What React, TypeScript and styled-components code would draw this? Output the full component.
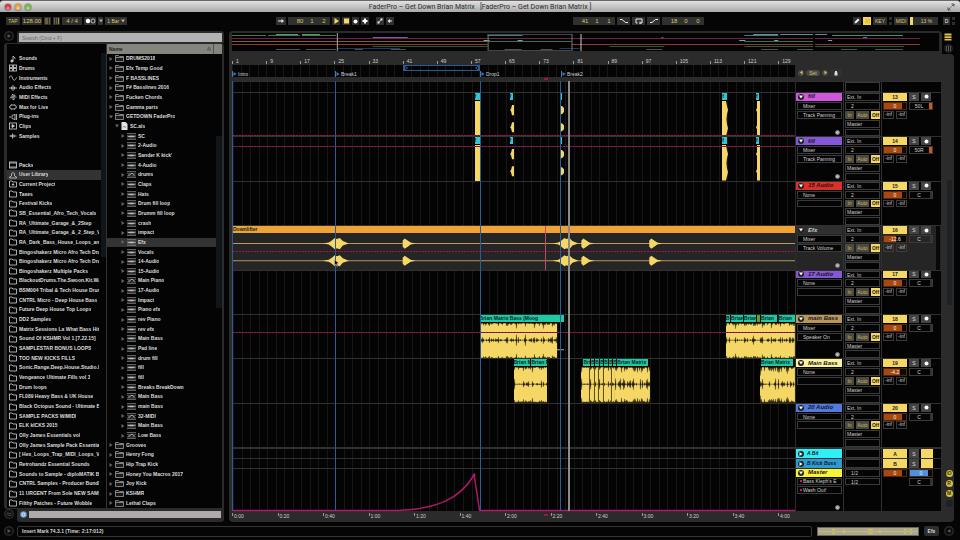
import React from "react";
import styled, { createGlobalStyle, css } from "styled-components";

const SANS = '"Liberation Sans", Arial, sans-serif';
const YELLOW = "#f5d766";
const SPAN = 563;

const Global = createGlobalStyle`
  * { box-sizing: border-box; }
  html, body, #root { margin: 0; height: 100%; }
  body { background: #050505; overflow: hidden; color: #d0d0d0; font: 5px/7px ${SANS}; }
  button, input, select { font: inherit; color: inherit; margin: 0; padding: 0; border: 0; border-radius: 0; background: none; appearance: none; min-width: 0; }
  ul { list-style: none; margin: 0; padding: 0; }
  svg { display: block; flex: none; }
`;

const Page = styled.div`
  height: 100vh;
  display: grid;
  grid-template-rows: 12px 19px minmax(0, 1fr) 17px;
`;

/* ---------- title bar ---------- */

const TitleBar = styled.header`
  display: flex;
  align-items: center;
  padding: 0 5px;
  border-top: 1px solid #6d646c;
  background: linear-gradient(#e2e2e2, #a9a9a9);
  border-radius: 3px 3px 0 0;
`;
const Lights = styled.div`
  flex: 1 0 0;
  display: flex;
  gap: 4px;
`;
const Light = styled.button<{ $c: string }>`
  width: 6px;
  height: 6px;
  border-radius: 50%;
  background: radial-gradient(circle at 50% 70%, #fff9, transparent 45%), ${(p) => p.$c};
  box-shadow: 0 0 0 1px #0003;
`;
const Title = styled.h1`
  margin: 0;
  color: #2c2c2c;
  font: 400 7px/10px Roboto, "Noto Sans", sans-serif;
  white-space: pre;
`;
const TitleEnd = styled.div`
  flex: 1 0 0;
  display: flex;
  justify-content: flex-end;
`;

/* ---------- transport ---------- */

const Transport = styled.div`
  display: grid;
  grid-template-columns: 270fr 297fr 280fr 107fr;
  align-items: center;
  padding: 0 0 1px 6px;
`;
const Group = styled.div`
  display: flex;
  align-items: center;
  gap: 2px;
`;
const Btn = styled.button<{ $w: number; $on?: boolean; $white?: boolean }>`
  display: flex;
  flex: none;
  align-items: center;
  justify-content: center;
  width: ${(p) => p.$w}px;
  height: 8px;
  background: ${(p) => (p.$on ? YELLOW : "#303030")};
  color: ${(p) => (p.$on ? "#222" : p.$white ? "#eee" : "#dcc765")};
`;
const NumBox = styled.input<{ $w: number }>`
  width: ${(p) => p.$w}px;
  height: 8px;
  background: #303030;
  color: #dcc765;
  font-size: 6px;
  text-align: center;
`;
const Fields = styled.div`
  display: flex;
  width: 42px;
  padding-left: 6px;
  background: #303030;
`;
const Space = styled.span<{ $w: number }>`
  width: ${(p) => p.$w}px;
`;
const Cpu = styled.div`
  width: 28px;
  height: 8px;
  padding-left: 2px;
  line-height: 8px;
  text-align: center;
  color: #dcc765;
  background: #303030;
  border-left: 3px solid ${YELLOW};
`;
const Dots = styled.div`
  display: grid;
  gap: 2px;
  width: 3px;
  &::before, &::after { content: ""; height: 3px; background: #2e2e2d; }
`;

/* ---------- frame ---------- */

const Main = styled.main`
  display: grid;
  grid-template-columns: 220px minmax(0, 1fr);
  column-gap: 5px;
  padding: 0 6px 0 4px;
  min-height: 0;
`;
const Browser = styled.section`
  display: grid;
  grid-template-rows: 12px minmax(0, 1fr) 13px;
  padding-bottom: 1px;
  min-height: 0;
`;
const BrowserRow = styled.div`
  display: grid;
  grid-template-columns: 13px minmax(0, 1fr);
`;
const RoundBtn = styled.button`
  width: 10px;
  height: 10px;
  border-radius: 50%;
  background: #2a2a2a;
  display: flex;
  align-items: center;
  justify-content: center;
`;
const SearchFrame = styled.div`
  background: #2b2b2b;
  border-radius: 3px 3px 0 0;
  padding: 2px 2px 1px;
`;
const Search = styled.input`
  display: block;
  width: 100%;
  height: 9px;
  padding-left: 3px;
  background: #b3b3b3;
  color: #333;
  &::placeholder { color: #6b6b6b; opacity: 1; }
`;
const BrowserPanel = styled.div`
  display: grid;
  grid-template-columns: 94px 5px 1px minmax(0, 1fr);
  background: #040404;
  border: solid #2b2b2b;
  border-width: 1px 2px 1px 3px;
  border-radius: 3px 3px 0 3px;
  min-height: 0;
`;
const List = styled.ul<{ $padTop?: boolean }>`
  display: grid;
  grid-template-rows: repeat(47, minmax(0, 1fr));
  margin-top: ${(p) => (p.$padTop ? 10 : 0)}px;
  min-height: 0;
`;
const ListItem = styled.li`
  display: grid;
  min-height: 0;
`;
const Entry = styled.button<{ $sel?: boolean; $level?: number }>`
  display: flex;
  align-items: center;
  gap: 2px;
  width: 100%;
  padding: 0 2px;
  padding-left: ${(p) => 2 + (p.$level ?? 0) * 6}px;
  overflow: hidden;
  background: ${(p) => (p.$sel ? "#333" : "transparent")};
  color: #dcdcdc;
  font-weight: 700;
  text-align: left;
  white-space: nowrap;
  line-height: 7px;
`;
const Label = styled.span`
  overflow: hidden;
`;
const ScrollTrack = styled.div<{ $from: number; $to: number }>`
  background: linear-gradient(transparent ${(p) => p.$from}%, #10151a ${(p) => p.$from}% ${(p) => p.$to}%, transparent ${(p) => p.$to}%);
`;
const Divider = styled.div`
  background: #333;
`;
const Files = styled.div`
  display: grid;
  grid-template-columns: minmax(0, 1fr) 6px;
  grid-template-rows: 10px minmax(0, 1fr);
  min-height: 0;
`;
const FilesHead = styled.div`
  grid-column: 1 / -1;
  display: flex;
  justify-content: space-between;
  padding: 0 11px 0 2px;
  line-height: 10px;
  font-weight: 700;
  color: #222;
  background: linear-gradient(90deg, transparent 106px, #555 106px 107px, transparent 107px), #85857d;
`;
const InfoFrame = styled.div`
  display: grid;
  grid-template-columns: 8px minmax(0, 1fr);
  align-items: center;
  background: #2b2b2b;
  border-radius: 0 0 3px 3px;
  padding: 1px 3px 3px;
`;
const InfoBar = styled.div`
  height: 7px;
  margin-left: 1px;
  background: #aeaaaa;
`;

/* ---------- arrangement ---------- */

const Arrange = styled.section`
  display: grid;
  grid-template-rows: 23px minmax(0, 1fr);
  padding-bottom: 1px;
  min-height: 0;
`;
const OverviewRow = styled.div`
  display: grid;
  grid-template-columns: minmax(0, 1fr) 12px;
`;
const OverviewFrame = styled.div`
  background: #2b2b2b;
  border-radius: 4px 4px 0 0;
  padding: 2px 3px 3px;
`;
const OverviewSvg = styled.svg`
  width: 100%;
  height: 18px;
  background: #040404;
`;
const SideIcons = styled.div`
  display: grid;
  justify-items: center;
  align-content: space-around;
`;
const Body = styled.div`
  display: grid;
  grid-template-columns: minmax(0, 1fr) 146px 13px;
  grid-template-rows: 11px 12px 4px minmax(0, 1fr) 11px;
  padding-left: 3px;
  background: #2b2b2b;
  border-radius: 0 4px 4px 4px;
  min-height: 0;
`;
const grid = css`
  background-color: #040404;
  background-image: repeating-linear-gradient(90deg, #171717 0, #171717 1px, transparent 1px, transparent 1.5158%);
`;
const Ruler = styled.div<{ $row: number }>`
  grid-column: 1;
  grid-row: ${(p) => p.$row};
  position: relative;
  overflow: hidden;
`;
const Mark = styled.span<{ $x: number }>`
  position: absolute;
  bottom: 1px;
  left: ${(p) => (p.$x / SPAN) * 100}%;
  padding-left: 4px;
  line-height: 6px;
  color: #cfcfcf;
  background: linear-gradient(#999, #999) 0 100% / 1px 3px no-repeat;
  white-space: nowrap;
`;
const TimeMark = styled(Mark)`
  bottom: 3px;
  padding-left: 2px;
  background-position: 0 0;
`;
const InsertMark = styled.i<{ $top: number }>`
  position: absolute;
  top: ${(p) => p.$top}px;
  left: ${(312 / SPAN) * 100}%;
  width: 4px;
  height: 2px;
  background: #a01838;
`;
const Locators = styled.div`
  ${grid}
  grid-column: 1;
  grid-row: 2;
  position: relative;
`;
const Loop = styled.div`
  position: absolute;
  top: 0;
  left: ${(170.5 / SPAN) * 100}%;
  width: ${(77 / SPAN) * 100}%;
  height: 6px;
  display: flex;
  align-items: center;
  justify-content: space-between;
  border: 1px solid #2c5c98;
`;
const Locator = styled.button<{ $x: number }>`
  position: absolute;
  top: 6px;
  left: ${(p) => (p.$x / SPAN) * 100}%;
  display: flex;
  align-items: center;
  gap: 1px;
  height: 6px;
  border-left: 1px solid #3b7cc4;
  line-height: 6px;
`;
const SetRow = styled.div`
  grid-column: 2;
  grid-row: 1 / 3;
  align-self: end;
  display: flex;
  align-items: center;
  gap: 2px;
  height: 9px;
  margin-left: 3px;
`;
const Pill = styled.button<{ $w: number }>`
  width: ${(p) => p.$w}px;
  height: 6px;
  line-height: 6px;
  border-radius: 3px;
  display: flex;
  align-items: center;
  justify-content: center;
  background: #4a4a42;
  color: #d0c070;
`;
const trackRows = css`
  grid-row: 4;
  display: grid;
  grid-template-rows: 11px repeat(8, minmax(0, 1fr)) 11px 10px 43px;
  min-height: 0;
`;
const Lanes = styled.div`
  ${trackRows}
  ${grid}
  grid-column: 1;
  position: relative;
  border-left: 1px solid #2c5c98;
`;
const Lane = styled.div<{ $sel?: boolean; $thick?: boolean }>`
  position: relative;
  min-height: 0;
  border-top: ${(p) => (p.$thick ? 2 : 1)}px solid #303030;
  background: ${(p) => (p.$sel ? "#252525" : "transparent")};
`;
const VLine = styled.i<{ $x: number; $c: string; $w?: number }>`
  position: absolute;
  z-index: 2;
  top: 0;
  bottom: 0;
  left: ${(p) => (p.$x / SPAN) * 100}%;
  width: ${(p) => p.$w ?? 1}px;
  background: ${(p) => p.$c};
`;
const Pointer = styled.svg`
  position: absolute;
  z-index: 3;
  top: 64%;
  left: 40%;
`;
const PointerSpot = styled.div<{ $x: number }>`
  position: absolute;
  z-index: 3;
  top: 75%;
  left: ${(p) => (p.$x / SPAN) * 100}%;
`;
const Automation = styled.i<{ $y: number }>`
  position: absolute;
  z-index: 1;
  left: 0;
  right: 0;
  top: ${(p) => p.$y}%;
  height: 1px;
  background: repeating-linear-gradient(90deg, #8e1c50 0 2px, #4c1230 2px 3px);
`;
const ClipName = styled.button<{ $x: number; $w: number; $c?: string }>`
  position: absolute;
  top: 0;
  left: ${(p) => (p.$x / SPAN) * 100}%;
  width: ${(p) => (p.$w / SPAN) * 100}%;
  height: 7px;
  overflow: hidden;
  white-space: nowrap;
  text-align: left;
  font-weight: 700;
  color: #0b2620;
  line-height: 7px;
  background: ${(p) => p.$c ?? "#1fc9a4"};
`;
const WaveBox = styled.svg<{ $x: number; $w: number }>`
  position: absolute;
  top: 8px;
  left: ${(p) => (p.$x / SPAN) * 100}%;
  width: ${(p) => (p.$w / SPAN) * 100}%;
  height: calc(100% - 8px);
`;
const Heads = styled.div`
  ${trackRows}
  grid-column: 2;
  margin-left: 1px;
  background: #040404;
`;
const Head = styled.div<{ $sel?: boolean; $thick?: boolean }>`
  display: grid;
  grid-template-columns: 48px 38px minmax(0, 1fr);
  min-height: 0;
  border-top: ${(p) => (p.$thick ? 2 : 1)}px solid #303030;
  background: ${(p) => (p.$sel ? "linear-gradient(90deg, transparent 140px, #080808 140px 144px, transparent 144px), #252525" : "transparent")};
  overflow: hidden;
`;
const Cell = styled.div<{ $rows?: number }>`
  display: grid;
  grid-template-rows: repeat(${(p) => p.$rows ?? 5}, minmax(0, 1fr));
  row-gap: 1px;
  align-content: start;
  min-height: 0;
  padding: 0 1px;
  border-right: 1px solid #303030;
  &:last-child { border-right: 0; padding: 0 1px; }
`;
const NameBar = styled.div<{ $c: string; $light?: boolean }>`
  display: flex;
  align-items: center;
  gap: 4px;
  margin-left: -1px;
  padding-left: 2px;
  background: ${(p) => p.$c};
  color: ${(p) => (p.$light ? "#ccc" : "#1a1424")};
  font: italic 700 6px/7px ${SANS};
  white-space: nowrap;
  min-height: 0;
`;
const ReturnName = styled(NameBar)`
  gap: 3px;
  font-size: 5px;
`;
const Fold = styled.button`
  width: 6px;
  height: 6px;
  border-radius: 50%;
  background: #222;
  display: flex;
  align-items: center;
  justify-content: center;
`;
const Choice = styled.select<{ $indent?: number }>`
  width: 100%;
  height: 100%;
  min-height: 0;
  padding-left: ${(p) => p.$indent ?? 1}px;
  border: 1px solid #3a3a3a;
  background: #040404;
  color: #cfcfcf;
  line-height: 6px;
`;
const Line = styled.div<{ $cols: string }>`
  display: grid;
  grid-template-columns: ${(p) => p.$cols};
  column-gap: 2px;
  min-height: 0;
`;
const Mini = styled.button<{ $tone: "on" | "dim" | "grey" | "blank" }>`
  display: flex;
  align-items: center;
  justify-content: center;
  min-height: 0;
  overflow: hidden;
  line-height: 6px;
  background: ${(p) => ({ on: YELLOW, dim: "#4b4a3f", grey: "#444", blank: "transparent" })[p.$tone]};
  color: ${(p) => ({ on: "#222", dim: "#c9b75f", grey: "#ddd", blank: "#ddd" })[p.$tone]};
  font-weight: ${(p) => (p.$tone === "on" ? 700 : 400)};
`;
const Vol = styled.input<{ $fill: number; $c?: string }>`
  width: 100%;
  height: 100%;
  text-align: center;
  color: #eee;
  border: 1px solid #4a2a16;
  background: linear-gradient(90deg, ${(p) => p.$c ?? "#a8480f"} ${(p) => p.$fill}%, #0a0a0a ${(p) => p.$fill}%);
`;
const Pan = styled.input<{ $hot?: boolean }>`
  width: 100%;
  height: 100%;
  padding-right: 4px;
  text-align: center;
  border: 1px solid #3a3a3a;
  background: ${(p) => (p.$hot ? "linear-gradient(90deg, transparent 86%, #c85a1e 86%)" : "linear-gradient(90deg, transparent 90%, #333 90%)")};
`;
const Level = styled.output`
  border: 1px solid #3a3a3a;
  text-align: center;
  line-height: 5px;
  overflow: hidden;
`;
const AddRow = styled.div`
  display: flex;
  justify-content: flex-end;
  align-items: center;
  padding-right: 2px;
`;
const AddBtn = styled.button`
  width: 5px;
  height: 5px;
  border-radius: 50%;
  border: 1px solid #777;
  background: #bbb;
`;
const Device = styled.div`
  display: flex;
  align-items: center;
  gap: 1px;
  padding-left: 2px;
  border: 1px solid #3a3a3a;
  overflow: hidden;
  white-space: nowrap;
  line-height: 6px;
  &::before { content: ""; flex: none; width: 2px; height: 2px; background: #d01860; }
`;
const Side = styled.div`
  grid-column: 3;
  grid-row: 4;
  display: flex;
  flex-direction: column;
  justify-content: flex-end;
  align-items: center;
  gap: 3px;
  padding: 0 0 4px 3px;
  background: linear-gradient(transparent 23%, #1e2225 23% 52%, transparent 52%) 75% 0 / 5px 100% no-repeat;
`;
const SideBtn = styled.button<{ $off?: boolean }>`
  width: 7px;
  height: 7px;
  border-radius: 50%;
  line-height: 7px;
  font-weight: 700;
  text-align: center;
  color: #3a3210;
  background: ${(p) => (p.$off ? "#1b2229" : "#d8c242")};
`;

/* ---------- status ---------- */

const Status = styled.footer`
  display: grid;
  grid-template-columns: 8px minmax(0, 1fr) 102px 15px 10px;
  column-gap: 5px;
  align-items: center;
  padding: 0 6px 1px 4px;
`;
const StatusText = styled.div`
  height: 11px;
  padding-left: 4px;
  border: 1px solid #333;
  border-radius: 2px;
  font-weight: 700;
  line-height: 9px;
  color: #d5d5d5;
`;
const DeviceStrip = styled.svg`
  width: 100%;
  height: 9px;
  background: #aaa890;
  border: 1px solid #666;
`;
const EfxTab = styled.button`
  height: 10px;
  border-radius: 2px;
  background: #2e2e2e;
  color: #ddd;
  font-weight: 700;
`;

/* ---------- icons ---------- */

type IconName = "note" | "drums" | "sine" | "fx" | "midifx" | "max" | "plug" | "clip" | "sample" | "packs" | "user" | "project" | "folder";
const shapes: Record<IconName, React.ReactNode> = {
  note: <><path d="M8 2v9M8 2l4 4v2" /><ellipse cx="6" cy="12" rx="2.5" ry="2" fill="#ddd" /></>,
  drums: <><rect x="1" y="2" width="6" height="5" /><rect x="9" y="2" width="6" height="5" /><rect x="1" y="9" width="6" height="5" /><rect x="9" y="9" width="6" height="5" /></>,
  sine: <path d="M0 9c2-7 5-7 7-1s5 6 8-1" />,
  fx: <path d="M0 8h16M5 5v6M8 2v12M11 5v6" />,
  midifx: <><path d="M3 8h12M8 2v12M5 5l3-3M8 14l4-3M4 11v-3" /><circle cx="11" cy="5" r="1" /></>,
  max: <><rect x="2" y="4" width="12" height="8" rx="3" /><path d="M0 8h2M14 8h2M5 3v2M11 3v2M5 11v2M11 11v2" /></>,
  plug: <path d="M0 8h4M12 2v12M12 3L6 5v6l6 2M15 2v12" />,
  clip: <><rect x="1" y="2" width="14" height="12" /><path d="M6 5l5 3-5 3z" fill="#ddd" /></>,
  sample: <path d="M1 8h14M4 6v4M7 3v10M10 5v6" />,
  packs: <><rect x="1" y="2" width="14" height="12" /><path d="M1 4h14M1 12h14" /></>,
  user: <path d="M1 14h14v-2l-4-2V8c2-6-8-6-6 0v2l-4 2z" />,
  project: <><path d="M1 2h5l2 2h7v10H1z" /><circle cx="8" cy="9" r="1.5" fill="#ddd" /></>,
  folder: <path d="M1 2h5l2 2h7v10H1z" />,
};
const Icon = ({ n, s = 8 }: { n: IconName; s?: number }) => (
  <svg width={s} height={s} viewBox="0 0 16 16" fill="none" stroke="#c8c8c8" strokeWidth="1.7">{shapes[n]}</svg>
);
const Tri = ({ open, c = "#666" }: { open?: boolean; c?: string }) => (
  <svg width="4" height="4" viewBox="0 0 8 8"><path d={open ? "M0 1h8L4 7z" : "M1 0v8l6-4z"} fill={c} /></svg>
);
const FileIcon = ({ kind }: { kind: string }) => {
  if (kind === "folder")
    return <svg width="9" height="7" viewBox="0 0 18 14" fill="#1b1b1b" stroke="#9a9a9a" strokeWidth="1.6"><path d="M1 1h6l2 2h8v10H1zM1 5h16" /></svg>;
  if (kind === "set")
    return <svg width="7" height="8" viewBox="0 0 14 16"><path d="M1 0h8l4 4v12H1z" fill="#e4e4e4" /><path d="M4 11l2-3 2 3 2-1" stroke="#444" fill="none" /></svg>;
  return (
    <svg width="9" height="7" viewBox="0 0 18 14" fill="none" stroke="#777" strokeWidth="1.6">
      <path d="M0 1h18M0 13h18M0 4.500h18M0 10h18" />
      {kind === "midi" ? <path d="M2 8h4l2-3h3l2 3h3" stroke="#ccc" /> : <path d="M1 7h16M5 6v2M8 5v4M11 5.500v3" stroke="#ccc" />}
    </svg>
  );
};
const PlayRing = ({ back }: { back?: boolean }) => (
  <RoundBtn aria-label={back ? "Hide device" : "Show"}>
    <svg width="8" height="8" viewBox="0 0 16 16"><circle cx="8" cy="8" r="7" fill="#0a0a0a" /><path d={back ? "M11 4v8L4 8z" : "M5 4v8l7-4z"} fill="#555" /></svg>
  </RoundBtn>
);
const G = ({ d, fill, w = 8 }: { d: string; fill?: string; w?: number }) => (
  <svg width={w} height="6" viewBox={`0 0 ${w * 2} 12`} fill={fill ?? "none"} stroke={fill ? "none" : "#eee"} strokeWidth="2"><path d={d} /></svg>
);

/* ---------- data ---------- */

const categories: [IconName, string][] = [
  ["note", "Sounds"], ["drums", "Drums"], ["sine", "Instruments"], ["fx", "Audio Effects"], ["midifx", "MIDI Effects"],
  ["max", "Max for Live"], ["plug", "Plug-ins"], ["clip", "Clips"], ["sample", "Samples"],
];
const places: [IconName, string][] = [
  ["packs", "Packs"], ["user", "User Library"], ["project", "Current Project"],
  ...[
    "Taxes", "Festival Kicks", "SB_Essential_Afro_Tech_Vocals", "RA_Ultimate_Garage_&_2Step", "RA_Ultimate_Garage_&_2_Step_V",
    "RA_Dark_Bass_House_Loops_an", "Bingoshakerz Micro Afro Tech Dru", "Bingoshakerz Micro Afro Tech Dru", "Bingoshakerz Multiple Packs",
    "BlackoutDrums.The.Swoon.Kit.WA", "BSM004 Tribal & Tech House Drun", "CNTRL Micro - Deep House Bass", "Future Deep House Top Loops",
    "DD2 Samples", "Matrix Sessions La What Bass Hit", "Sound Of KSHMR Vol 1 [7.22.15]", "SAMPLESTAR BONUS LOOPS", "TOO NEW KICKS FILLS",
    "Sonic.Range.Deep.House.Studio.K", "Vengeance Ultimate Fills vol 3", "Drum loops", "FL089 Heavy Bass & UK House", "Black Octopus Sound - Ultimate B",
    "SAMPLE PACKS W/MIDI", "ELK kICKS 2015", "Olly James Essentials vol", "Olly James Sample Pack Essentia", "[ Hex_Loops_Trap_MIDI_Loops_V",
    "Retrohandz Essential Sounds", "Sounds to Sample - diploMATIK B", "CNTRL Samples - Producer Bundl", "11 URGENT From Sole NEW SAMI", "Filthy Patches - Future Wobble",
  ].map((t): [IconName, string] => ["folder", t]),
];
const clipFiles = [
  "SC", "2-Audio", "Sander K kick'", "4-Audio", "~drums", "Claps", "Hats", "Drum fill loop", "Drumm fill loop", "crash", "impact", "Efx", "Vocals",
  "14-Audio", "15-Audio", "~Main Piano", "17-Audio", "Impact", "Piano efx", "rev Piano", "rev efx", "Main Bass", "Pad line", "drum fill", "fill", "fill",
  "Breaks BreakDown", "~Main Bass", "main Bass", "~32-MIDI", "Main Bass", "~Low Bass",
];
type FileRow = { level: number; kind: string; label: string; open?: boolean };
const files: FileRow[] = [
  ...["DRUMS2018", "Efx Temp Good", "F BASSLINES", "F# Basslines 2016", "Fucken Chords", "Gamma parts"].map((label) => ({ level: 0, kind: "folder", label })),
  { level: 0, kind: "folder", label: "GETDOWN FaderPro", open: true },
  { level: 1, kind: "set", label: "SC.als", open: true },
  ...clipFiles.map((c) => ({ level: 2, kind: c[0] === "~" ? "midi" : "audio", label: c.replace("~", "") })),
  ...["Grooves", "Henry Fong", "Hip Trap Kick", "Honey You Macros 2017", "Joy Kick", "KSHMR", "Lethal Claps"].map((label) => ({ level: 0, kind: "folder", label })),
];

type Track = { name: string; color: string; dev: string; param?: string; n: number; vol: string; fill: number; pan: string; sel?: boolean };
const tracks: Track[] = [
  { name: "fill", color: "#cf56dd", dev: "Mixer", param: "Track Panning", n: 13, vol: "0", fill: 84, pan: "50L" },
  { name: "fill", color: "#8458d6", dev: "Mixer", param: "Track Panning", n: 14, vol: "0", fill: 84, pan: "50R" },
  { name: "15 Audio", color: "#dc3226", dev: "None", n: 15, vol: "0", fill: 84, pan: "C" },
  { name: "Efx", color: "#303030", dev: "Mixer", param: "Track Volume", n: 16, vol: "-12.6", fill: 55, pan: "C", sel: true },
  { name: "17 Audio", color: "#8458d6", dev: "None", n: 17, vol: "0", fill: 84, pan: "C" },
  { name: "main Bass", color: "#b9975c", dev: "Mixer", param: "Speaker On", n: 18, vol: "0", fill: 84, pan: "C" },
  { name: "Main Bass", color: "#fbf49c", dev: "None", n: 19, vol: "-4.2", fill: 74, pan: "C" },
  { name: "20 Audio", color: "#5279dc", dev: "None", n: 20, vol: "0", fill: 84, pan: "C" },
];

/* ---------- waveforms ---------- */

const noise = (i: number, seed: number) => {
  const v = Math.sin(i * 12.9898 + seed * 78.233) * 43758.5453;
  return v - Math.floor(v);
};

const BassWave = ({ x, w, seed, rough = 1 }: { x: number; w: number; seed: number; rough?: number }) => {
  let d = "";
  for (let i = 0; i < w; i += 1) {
    const beat = i % 9 < 1 ? 3 : 0;
    const a = noise(i, seed) ** 2 * 3 * rough + beat;
    const m = noise(i, seed + 7) ** 3 * 3 * rough + beat;
    d += `M${i} 0h1l-.5 ${a.toFixed(1)}zM${i} 36h1l-.5 -${(a * 0.8).toFixed(1)}zM${i} 17.500l.5 -${m.toFixed(1)} .5 ${m.toFixed(1)} -.5 ${m.toFixed(1)}z`;
  }
  return (
    <WaveBox $x={x} $w={w} viewBox={`0 0 ${w} 36`} preserveAspectRatio="none">
      <rect width={w} height="36" fill={YELLOW} />
      <path d={d} fill="#141208" stroke="#141208" strokeWidth=".25" />
    </WaveBox>
  );
};

const fillShapes: { x: number; w: number; nx: number; nw: number; d: string }[] = [
  { x: 242, w: 6, nx: 242, nw: 5, d: "M0 0h5v7l1 2-1 3v13l1 2-1 2v7H0z" },
  { x: 277, w: 6, nx: 277, nw: 4, d: "M2 4h2v10H2l-1-4-1-1 1-1zM2 21h2v10H2l-1-4-1-1 1-1z" },
  { x: 328, w: 4, nx: 328, nw: 2, d: "M0 5h2l2 2v4l-2 2H0zM0 22h2l2 2v4l-2 2H0z" },
  { x: 490, w: 6, nx: 490, nw: 5, d: "M0 0h4l1 5 1 4-1 4-.5 5 .5 5 1 4-1 4-1 4H0z" },
  { x: 524, w: 4, nx: 524, nw: 3, d: "M1 0h3v35H1v-7l-1-2 1-2V11l-1-2 1-2z" },
];
const FillClips = () => (
  <>
    {fillShapes.map((f) => (
      <React.Fragment key={f.x}>
        <ClipName $x={f.nx} $w={f.nw} $c="#35c5cd" aria-label="fill clip">{f.nw > 2 ? "f" : ""}</ClipName>
        <WaveBox $x={f.x} $w={f.w} viewBox={`0 0 ${f.w} 35`} preserveAspectRatio="none"><path d={f.d} fill={YELLOW} /></WaveBox>
      </React.Fragment>
    ))}
  </>
);

const single = (x: number, y: number) => `M${x} ${y - 3}l2-2 3 2 3 2 5 1-5 1-3 2-3 2-2-2z`;
const double = (x: number, y: number) => `M${x - 12} ${y}l6-1 3-2 3-2.500 2 1 3-1 3 3 6 2.500-6 2-3 3.500-3-1-2 1-3-2.500-3-2z`;
const EfxWave = () => (
  <WaveBox $x={0} $w={SPAN} viewBox="0 0 563 35" preserveAspectRatio="none">
    {[9, 26].map((y) => (
      <g key={y}>
        <path d={`M0 ${y}.500H563`} stroke="#b5995f" />
        <path d={[double(102, y + 0.5), single(170, y + 0.5), double(332, y + 0.5), single(349, y + 0.5), single(417, y + 0.5)].join("")} fill={YELLOW} />
      </g>
    ))}
  </WaveBox>
);

const Names = ({ items }: { items: [number, number, string, string?][] }) => (
  <>{items.map(([x, w, t, c]) => <ClipName key={x} $x={x} $w={w} $c={c}>{t}</ClipName>)}</>
);

const laneContent: Record<number, React.ReactNode> = {
  13: <><FillClips /><Automation $y={96} /></>,
  14: <><FillClips /><Automation $y={20} /></>,
  16: (
    <>
      <ClipName $x={0} $w={SPAN} $c="#f0a236">Downlifter</ClipName>
      <EfxWave />
      <Automation $y={57} />
      <VLine $x={313} $c="#c04a60" />
      <PointerSpot $x={101}>
        <svg width="6" height="8" viewBox="0 0 12 16"><path d="M1 1v12l3-3 2 5 2-1-2-5h4z" fill="#111" stroke="#ccc" strokeWidth="1" /></svg>
      </PointerSpot>
    </>
  ),
  18: (
    <>
      <Names items={[[247, 85, "Brian Matrix Bass (Moog"], [494, 4, "B"], [499, 12, "Brian"], [512, 12, "Brian"], [525, 3, "", "#58a81c"], [529, 16, "Brian"], [547, 16, "Brian"]]} />
      <BassWave x={247} w={78} seed={3} />
      <WaveBox $x={325} $w={7} viewBox="0 0 7 35" preserveAspectRatio="none"><path d="M0 9.500H7M0 26.500H7" stroke="#aaa" /></WaveBox>
      <BassWave x={494} w={69} seed={5} />
      <Automation $y={39} />
    </>
  ),
  19: (
    <>
      <Names items={[[281, 17, "Brian M"], [299, 16, "Brian M"], [351, 7, "Bri"], [359, 3, "B"], [363, 4, "B"], [368, 3, "B"], [372, 4, "B"], [377, 3, "B"], [381, 3, "B"], [385, 31, "Brian Matrix"], [529, 32, "Brian Matrix"]]} />
      <BassWave x={281} w={34} seed={2} />
      <BassWave x={349} w={34} seed={9} />
      <WaveBox $x={349} $w={34} viewBox="0 0 34 35" preserveAspectRatio="none"><path d="M8.500 0v35M13.500 0v35M17.500 0v35M22.500 0v35M30.500 0v35" stroke="#5a4c1c" /></WaveBox>
      <BassWave x={383} w={35} seed={4} rough={2} />
      <BassWave x={528} w={35} seed={6} rough={2} />
    </>
  ),
};

/* ---------- overview ---------- */

const seg = (y: number, c: string, ...xs: [number, number][]) => (
  <path d={xs.map(([a, b]) => `M${a - 232} ${y}H${b - 232}`).join("")} stroke={c} />
);
const Overview = () => (
  <OverviewSvg viewBox="0 0 708 18" preserveAspectRatio="none" role="img" aria-label="Arrangement overview">
    {seg(2.5, "#3e7d4f", [232, 266], [268, 300], [302, 336])}
    {seg(1.5, "#5f9a70", [276, 298], [302, 320])}
    {seg(5.5, "#70234a", [232, 921])}
    {seg(8.5, "#8a5a2a", [232, 488])}
    {seg(11.5, "#8a3b32", [232, 488], [572, 921])}
    {seg(8.5, "#267a4c", [488, 572], [745, 815])}
    {seg(13.5, "#255a3c", [373, 488], [610, 665], [745, 905])}
    {seg(2.5, "#3e7f86", [488, 523], [745, 779])}
    {seg(1.5, "#6e8a96", [524, 572], [754, 779], [781, 828])}
    {seg(2.5, "#2c9a78", [833, 904])}
    {seg(4.5, "#7560b0", [373, 408], [662, 664], [864, 868])}
    {seg(7.5, "#62b5b5", [484, 490], [518, 523], [740, 746], [775, 779], [829, 833])}
    {seg(16.5, "#4f5450", [276, 300], [306, 336], [355, 363], [391, 406], [505, 522], [541, 553], [647, 663], [762, 779], [798, 815], [842, 858], [876, 904])}
    {seg(15.5, "#1e3a5c", [338, 400], [560, 580])}
    <path d="M105.500 0V18" stroke="#aaa" />
    <path d="M256.500 1V18M340.500 1V18" stroke="#777" />
    <path d="M349.500 1V18" stroke="#ccc" />
    <path d="M256 1.500H340M256 17.500H340" stroke="#444" />
    <path d="M583 0V18" stroke="#000" strokeWidth="2" />
  </OverviewSvg>
);

/* ---------- parts ---------- */

const Chooser = ({ label, value, indent }: { label: string; value: string; indent?: number }) => (
  <Choice aria-label={label} $indent={indent} defaultValue={value}><option>{value}</option></Choice>
);
const Dot = () => <svg width="5" height="5" viewBox="0 0 10 10"><circle cx="5" cy="5" r="4" fill="#fff" /></svg>;
const FoldBtn = ({ closed }: { closed?: boolean }) => <Fold aria-label="Unfold track"><Tri open={!closed} c="#fff" /></Fold>;

const TrackHead = ({ t }: { t: Track }) => (
  <Head $sel={t.sel}>
    <Cell>
      <NameBar $c={t.color} $light={t.sel}><FoldBtn />{t.name}</NameBar>
      <Chooser label="Device" value={t.dev} indent={5} />
      <Chooser label="Parameter" value={t.param ?? ""} indent={5} />
      <span />
      {t.param && <AddRow><AddBtn aria-label="Add automation lane" /></AddRow>}
    </Cell>
    <Cell>
      <Chooser label="Input" value="Ext. In" />
      <Chooser label="Channel" value="2" indent={5} />
      <Line $cols="9fr 13fr 9fr"><Mini $tone="dim">In</Mini><Mini $tone="dim">Auto</Mini><Mini $tone="on">Off</Mini></Line>
      <Chooser label="Output" value="Master" />
      <Chooser label="Output channel" value="" />
    </Cell>
    <Cell>
      <Line $cols="24px 10px 10px"><Mini $tone="on">{t.n}</Mini><Mini $tone="grey">S</Mini><Mini $tone="grey" aria-label="Arm"><Dot /></Mini></Line>
      <Line $cols="24px 24px"><Vol aria-label="Volume" defaultValue={t.vol} $fill={t.fill} /><Pan aria-label="Pan" defaultValue={t.pan} $hot={t.pan !== "C"} /></Line>
      <Line $cols="11px 11px"><Level>-inf</Level><Level>-inf</Level></Line>
    </Cell>
  </Head>
);

const ReturnHead = ({ name, letter, color, thick }: { name: string; letter: string; color: string; thick?: boolean }) => (
  <Head $thick={thick}>
    <Cell $rows={1}><ReturnName $c={color}><FoldBtn closed />{name}</ReturnName></Cell>
    <Cell $rows={1}><Chooser label="Output" value="" /></Cell>
    <Cell $rows={1}><Line $cols="24px 10px 12px"><Mini $tone="on">{letter}</Mini><Mini $tone="grey">S</Mini><Mini $tone="on" aria-label="Post" /></Line></Cell>
  </Head>
);

const Position = ({ label, values }: { label: string; values: string[] }) => (
  <Fields role="group" aria-label={label}>{values.map((v, i) => <NumBox key={i} $w={12} aria-label={`${label} ${i + 1}`} defaultValue={v} />)}</Fields>
);

export default function App() {
  return (
    <Page>
      <Global />
      <TitleBar>
        <Lights>
          <Light $c="#d8343f" aria-label="Close" /><Light $c="#e3a13c" aria-label="Minimise" /><Light $c="#6fb944" aria-label="Zoom" />
        </Lights>
        <Title>{"FaderPro – Get Down Brian Matrix   [FaderPro – Get Down Brian Matrix ]"}</Title>
        <TitleEnd><svg width="8" height="8" viewBox="0 0 16 16" fill="none" stroke="#555" strokeWidth="2"><path d="M9 2h5v5M14 2L9 7M2 9v5h5M2 14l5-5" /></svg></TitleEnd>
      </TitleBar>

      <Transport>
        <Group>
          <Btn $w={14}>TAP</Btn>
          <NumBox $w={20} aria-label="Tempo" defaultValue="128.00" />
          <Btn $w={7} aria-label="Nudge down"><G w={5} d="M1 0h2v12H1zM4 0h1v12H4zM8 0h1v12H8z" fill="#9c8c4c" /></Btn>
          <Btn $w={7} aria-label="Nudge up"><G w={5} d="M1 0h1v12H1zM5 0h1v12H5zM8 0h2v12H8z" fill="#9c8c4c" /></Btn>
          <NumBox $w={20} aria-label="Time signature" defaultValue="4 / 4" />
          <Btn $w={12} aria-label="Metronome"><svg width="11" height="6" viewBox="0 0 22 12"><circle cx="6" cy="6" r="4.500" fill="#fff" /><circle cx="16" cy="6" r="4" fill="none" stroke="#ddd" strokeWidth="1.500" /></svg></Btn>
          <Btn $w={5} aria-label="Metronome settings"><Tri open c="#aaa" /></Btn>
          <Btn $w={22}>1 Bar&nbsp;<Tri open c="#c8b35a" /></Btn>
        </Group>
        <Group>
          <Btn $w={10} $white aria-label="Follow"><G d="M2 5h7V2l5 4-5 4V7H2z" fill="#eee" /></Btn>
          <Position label="Position" values={["80", "1", "2"]} />
          <Btn $w={8} aria-label="Play"><G w={5} d="M1 0v12l9-6z" fill={YELLOW} /></Btn>
          <Btn $w={8} aria-label="Stop"><G w={5} d="M0 1h10v10H0z" fill={YELLOW} /></Btn>
          <Btn $w={7} aria-label="Record"><Dot /></Btn>
          <Btn $w={8} aria-label="Overdub"><G w={6} d="M4 1h4v3h3v4H8v3H4V8H1V4h3z" fill="#fff" /></Btn>
          <Space $w={3} />
          <Btn $w={8} aria-label="Automation arm"><G w={6} d="M1 7h4v4H1zM7 1h4v4H7zM4 7l3-3 1 1-3 3z" fill="#eee" /></Btn>
          <Btn $w={8} aria-label="Re-enable automation"><G w={6} d="M1 6l5-4v3h4v2H6v3z" fill="#eee" /></Btn>
        </Group>
        <Group>
          <Position label="Loop start" values={["41", "1", "1"]} />
          <Btn $w={13} aria-label="Punch in"><G d="M0 3h4l7 6h5" /></Btn>
          <Btn $w={13} aria-label="Loop"><G d="M5 10H2V2h12v8h-4M10 7v5" /></Btn>
          <Btn $w={13} aria-label="Punch out"><G d="M0 9h4l7-6h5" /></Btn>
          <Position label="Loop length" values={["18", "0", "0"]} />
        </Group>
        <Group>
          <Btn $w={8} aria-label="Draw mode"><G w={6} d="M1 11l1-4 6-6 3 3-6 6z" fill="#eee" /></Btn>
          <Btn $w={8} $on aria-label="Computer keyboard"><G w={5} d="M0 1h10v10H0z" fill="#e9c43a" /></Btn>
          <Btn $w={14}>KEY</Btn><Dots /><Btn $w={14}>MIDI</Btn>
          <Cpu>13 %</Cpu><Space $w={1} /><Btn $w={7} $white>D</Btn><Dots />
        </Group>
      </Transport>

      <Main>
        <Browser>
          <BrowserRow>
            <PlayRing />
            <SearchFrame><Search aria-label="Search" placeholder="Search (Cmd + F)" /></SearchFrame>
          </BrowserRow>
          <BrowserPanel>
            <List $padTop>
              {categories.map(([n, t]) => <ListItem key={t}><Entry><Icon n={n} /><Label>{t}</Label></Entry></ListItem>)}
              <ListItem /><ListItem />
              {places.map(([n, t], i) => <ListItem key={i}><Entry $sel={i === 1}><Icon n={n} /><Label>{t}</Label></Entry></ListItem>)}
            </List>
            <ScrollTrack $from={2} $to={46} />
            <Divider />
            <Files>
              <FilesHead><span>Name</span><svg width="4" height="9" viewBox="0 0 8 18"><path d="M1 12h6L4 6z" fill="none" stroke="#333" /></svg></FilesHead>
              <List>
                {files.map((f, i) => (
                  <ListItem key={i}>
                    <Entry $sel={f.label === "Efx"} $level={f.level}><Tri open={f.open} /><FileIcon kind={f.kind} /><Label>{f.label}</Label></Entry>
                  </ListItem>
                ))}
              </List>
              <ScrollTrack $from={18} $to={56} />
            </Files>
          </BrowserPanel>
          <BrowserRow>
            <RoundBtn aria-label="Groove pool"><svg width="8" height="8" viewBox="0 0 16 16" fill="none" stroke="#666" strokeWidth="1.500"><circle cx="8" cy="8" r="7" fill="#0a0a0a" stroke="none" /><path d="M3 7c3-4 6 3 10-1M3 11c3-4 6 3 10-1" /></svg></RoundBtn>
            <InfoFrame>
              <svg width="7" height="7" viewBox="0 0 14 14"><circle cx="7" cy="7" r="6.500" fill="#6d9ed2" /><circle cx="7" cy="7" r="3" fill="none" stroke="#e6f0fa" strokeWidth="2" /></svg>
              <InfoBar />
            </InfoFrame>
          </BrowserRow>
        </Browser>

        <Arrange>
          <OverviewRow>
            <OverviewFrame><Overview /></OverviewFrame>
            <SideIcons>
              <svg width="8" height="8" viewBox="0 0 16 16"><path d="M1 1h14v4H1zM1 6.500h14v4H1zM1 12h14v3H1z" fill="#d8c242" /></svg>
              <svg width="9" height="9" viewBox="0 0 18 18"><circle cx="9" cy="9" r="8" fill="#161616" stroke="#3a3a3a" /><path d="M5 4v10M9 3v12M13 4v10" stroke="#555" strokeWidth="2" /></svg>
            </SideIcons>
          </OverviewRow>
          <Body>
            <Ruler $row={1}>
              {Array.from({ length: 17 }, (_, i) => <Mark key={i} $x={i * 34.14}>{1 + i * 8}</Mark>)}
            </Ruler>
            <Locators>
              <Loop>
                <svg width="4" height="4" viewBox="0 0 8 8"><path d="M1 0v8l6-4z" fill="none" stroke="#2c5c98" strokeWidth="2" /></svg>
                <svg width="4" height="4" viewBox="0 0 8 8"><path d="M7 0v8L1 4z" fill="none" stroke="#2c5c98" strokeWidth="2" /></svg>
              </Loop>
              {([[0, "Intro"], [103, "Break1"], [248, "Drop1"], [329, "Break2"]] as [number, string][]).map(([x, t]) => (
                <Locator key={t} $x={x}><Tri c="#3b7cc4" />{t}</Locator>
              ))}
            </Locators>
            <SetRow>
              <Pill $w={6} aria-label="Previous locator"><G w={3} d="M5 1v8L0 5z" fill="#d0c070" /></Pill>
              <Pill $w={14}>Set</Pill>
              <Pill $w={6} aria-label="Next locator"><G w={3} d="M1 1v8l5-4z" fill="#d0c070" /></Pill>
              <Btn $w={12} aria-label="Lock envelopes"><G w={4} d="M1 5h6v6H1zM2 2h4v3H2z" fill="#ddd" /></Btn>
            </SetRow>
            <Ruler $row={3}><InsertMark $top={1} /></Ruler>
            <Lanes>
              <Lane />
              {tracks.map((t) => <Lane key={t.n} $sel={t.sel}>{laneContent[t.n]}</Lane>)}
              <Lane $thick />
              <Lane />
              <Lane>
                <WaveBox $x={0} $w={SPAN} viewBox="0 0 563 34" preserveAspectRatio="none" overflow="visible">
                  <path d="M0 33.500H165C205 32 227 22 241.500-2L247 33.500H563" fill="none" stroke="#b0186a" strokeWidth="1.500" />
                  <circle cx="241.500" cy="-2" r="1.500" fill="#b0186a" />
                </WaveBox>
              </Lane>
              <VLine $x={102.5} $c="#2c5c98" />
              <VLine $x={247} $c="#2c5c98" />
              <VLine $x={328} $c="#2c5c98" />
              <VLine $x={336} $c="#8c8c88" $w={2} />
            </Lanes>
            <Heads>
              <Head>
                <Cell $rows={1} />
                <Cell $rows={1}><Chooser label="Output channel" value="" /></Cell>
                <Cell $rows={1} />
              </Head>
              {tracks.map((t) => <TrackHead key={t.n} t={t} />)}
              <ReturnHead name="A Bit" letter="A" color="#2ff0f5" thick />
              <ReturnHead name="B Kick Buss" letter="B" color="#2e9ad2" />
              <Head>
                <Cell>
                  <NameBar $c="#f8f33a"><FoldBtn />Master</NameBar>
                  <Device>Bass Kleph's E</Device>
                  <Device>Wash Out!</Device>
                  <span />
                  <AddRow><AddBtn aria-label="Add automation lane" /></AddRow>
                </Cell>
                <Cell>
                  <Chooser label="Cue out" value="1/2" indent={5} />
                  <Chooser label="Master out" value="1/2" indent={5} />
                </Cell>
                <Cell>
                  <Line $cols="24px 24px"><Vol aria-label="Master volume" defaultValue="0" $fill={84} /><Vol aria-label="Cue volume" defaultValue="0" $fill={80} $c="#4f90e0" /></Line>
                  <Line $cols="24px 24px"><span /><Pan aria-label="Master pan" defaultValue="C" /></Line>
                </Cell>
              </Head>
            </Heads>
            <Side>
              <SideBtn aria-label="In/Out">IO</SideBtn><SideBtn aria-label="Returns">R</SideBtn><SideBtn aria-label="Mixer">M</SideBtn><SideBtn $off aria-label="Delay" />
            </Side>
            <Ruler $row={5}>
              {Array.from({ length: 13 }, (_, i) => <TimeMark key={i} $x={i * 45.5}>{`${Math.floor(i / 3)}:${["00", "20", "40"][i % 3]}`}</TimeMark>)}
              <InsertMark $top={3} />
            </Ruler>
          </Body>
        </Arrange>
      </Main>

      <Status>
        <PlayRing />
        <StatusText>Insert Mark 74.3.1 (Time: 2:17:012)</StatusText>
        <DeviceStrip viewBox="0 0 100 8" preserveAspectRatio="none"><path d="M0 4H100" stroke="#cbbb62" /><path d="M14 2h3M14 6h3M26 2v4M50 2h5M50 6h5M62 2v4M86 2h2M92 2h2M86 6h2M92 6h2" stroke="#e8cf3c" /></DeviceStrip>
        <EfxTab>Efx</EfxTab>
        <PlayRing back />
      </Status>
    </Page>
  );
}
